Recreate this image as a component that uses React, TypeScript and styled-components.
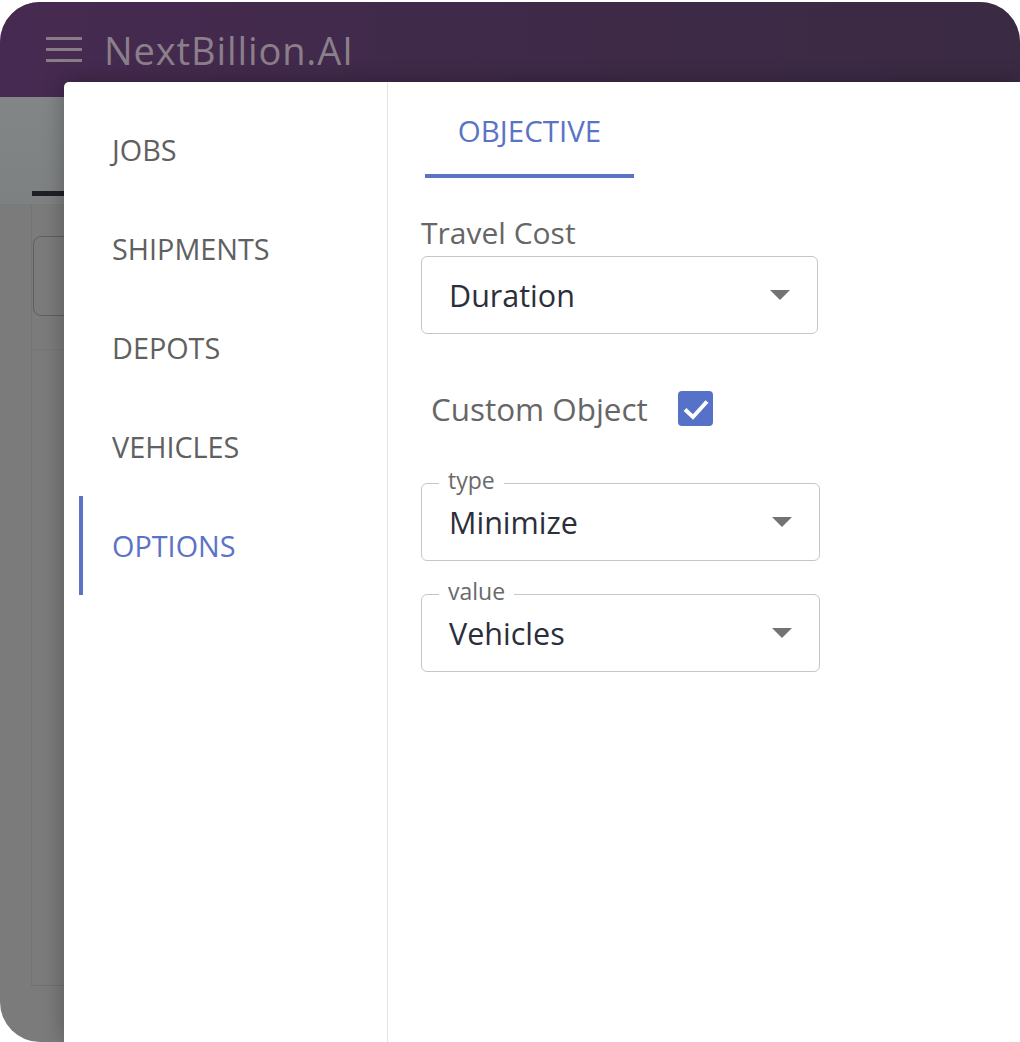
import React from 'react';
import styled, { createGlobalStyle } from 'styled-components';

const GlobalStyle = createGlobalStyle`
  html, body {
    margin: 0;
    padding: 0;
    background: #ffffff;
    font-family: 'Open Sans', 'Noto Sans', sans-serif;
  }
  * { box-sizing: border-box; }
`;

const Frame = styled.div`
  position: relative;
  margin-top: 2px;
  width: 1020px;
  height: 1040px;
  border-radius: 40px 40px 0 40px;
  overflow: hidden;
  display: flex;
  flex-direction: column;
  background: #7b7b7b;
`;

const AppHeader = styled.header`
  height: 95px;
  flex-shrink: 0;
  display: flex;
  align-items: center;
  gap: 22px;
  padding-left: 46px;
  background: linear-gradient(90deg, #472a51 0%, #3f2a49 45%, #3b2a43 100%);
`;

const Burger = styled.div`
  width: 36px;
  display: flex;
  flex-direction: column;
  gap: 7.5px;

  span {
    display: block;
    height: 3.5px;
    background: #877c87;
  }
`;

const Brand = styled.div`
  font-size: 38px;
  letter-spacing: 0.9px;
  color: #8b7f8a;
`;

const SubBar = styled.div`
  height: 108px;
  flex-shrink: 0;
  display: flex;
  align-items: flex-end;
  padding: 0 0 8px 32px;
  background: linear-gradient(180deg, #838687 0%, #7e8182 100%);
  border-bottom: 1px solid #777a7b;
`;

const TabMark = styled.div`
  width: 60px;
  height: 5px;
  background: #1e2024;
`;

const Body = styled.div`
  flex: 1;
  padding: 0 0 56px 31px;
  display: flex;
`;

const Card = styled.div`
  flex: 1;
  border-left: 1px solid #747474;
  border-bottom: 1px solid #6f6f6f;
`;

const CardSection = styled.div`
  height: 145px;
  padding: 31px 0 0 1px;
  border-bottom: 1px solid #757575;
`;

const GhostField = styled.div`
  height: 80px;
  border: 1.5px solid #5f5f5f;
  border-radius: 8px;
`;

const Modal = styled.div`
  position: absolute;
  top: 80px;
  left: 64px;
  right: 0;
  bottom: 0;
  display: flex;
  background: #ffffff;
  border-top-left-radius: 5px;
  box-shadow: 0 0 22px rgba(0, 0, 0, 0.3);
`;

const SideNav = styled.nav`
  width: 324px;
  flex-shrink: 0;
  padding: 18px 0 0 15px;
  border-right: 1px solid #e3e3e3;
  display: flex;
  flex-direction: column;
`;

const NavItem = styled.div<{ $active?: boolean }>`
  height: 99px;
  display: flex;
  align-items: center;
  padding-left: 29px;
  border-left: 4px solid ${(p) => (p.$active ? '#5b73c6' : 'transparent')};
  font-size: 28.8px;
  color: ${(p) => (p.$active ? '#5b73c6' : '#606060')};
  text-transform: uppercase;
`;

const Panel = styled.section`
  flex: 1;
  padding-left: 33px;
  display: flex;
  flex-direction: column;
  align-items: flex-start;
`;

const TabRow = styled.div`
  margin-left: 4px;
  display: flex;
`;

const Tab = styled.div`
  width: 209px;
  height: 96px;
  padding-top: 4px;
  display: flex;
  align-items: center;
  justify-content: center;
  font-size: 29.5px;
  color: #5b73c6;
  border-bottom: 4px solid #5b73c6;
`;

const FieldLabel = styled.div`
  margin-top: 37px;
  font-size: 30px;
  line-height: 36px;
  color: #666666;
`;

const SelectBox = styled.div<{ $gap: number; $wide?: boolean }>`
  position: relative;
  margin-top: ${(p) => p.$gap}px;
  width: ${(p) => (p.$wide ? 399 : 397)}px;
  height: 78px;
  padding: 0 27px 0 27px;
  display: flex;
  align-items: center;
  justify-content: space-between;
  border: 1.5px solid #c6c6c6;
  border-radius: 6px;
`;

const SelectValue = styled.span`
  font-size: 30.5px;
  color: #2b2e3b;
`;

const Legend = styled.span`
  position: absolute;
  top: -15px;
  left: 17px;
  padding: 0 9px;
  background: #ffffff;
  font-size: 23px;
  line-height: 23px;
  color: #6a6a6a;
`;

const CheckRow = styled.label`
  margin-top: 49px;
  height: 50px;
  padding-left: 10px;
  display: flex;
  align-items: center;
  gap: 30px;
  font-size: 31.4px;
  color: #666666;
`;

const CheckBox = styled.span`
  width: 35px;
  height: 35px;
  border-radius: 4px;
  background: #5571c8;
  display: flex;
  align-items: center;
  justify-content: center;
`;

const Arrow = () => (
  <svg width="20" height="10" viewBox="0 0 20 10">
    <polygon points="0,0 20,0 10,10" fill="#737373" />
  </svg>
);

const Select: React.FC<{
  value: string;
  legend?: string;
  gap: number;
  wide?: boolean;
}> = ({ value, legend, gap, wide }) => (
  <SelectBox $gap={gap} $wide={wide}>
    {legend && <Legend>{legend}</Legend>}
    <SelectValue>{value}</SelectValue>
    <Arrow />
  </SelectBox>
);

const navItems = ['Jobs', 'Shipments', 'Depots', 'Vehicles', 'Options'];

export default function App() {
  return (
    <>
      <GlobalStyle />
      <Frame>
        <AppHeader>
          <Burger>
            <span />
            <span />
            <span />
          </Burger>
          <Brand>NextBillion.AI</Brand>
        </AppHeader>
        <SubBar>
          <TabMark />
        </SubBar>
        <Body>
          <Card>
            <CardSection>
              <GhostField />
            </CardSection>
          </Card>
        </Body>

        <Modal>
          <SideNav>
            {navItems.map((item) => (
              <NavItem key={item} $active={item === 'Options'}>
                {item}
              </NavItem>
            ))}
          </SideNav>
          <Panel>
            <TabRow>
              <Tab>OBJECTIVE</Tab>
            </TabRow>
            <FieldLabel>Travel Cost</FieldLabel>
            <Select value="Duration" gap={5} />
            <CheckRow>
              Custom Object
              <CheckBox>
                <svg width="35" height="35" viewBox="0 0 35 35">
                  <path
                    d="M7 18.5 L15 26 L29 10.5"
                    fill="none"
                    stroke="#ffffff"
                    strokeWidth="4"
                  />
                </svg>
              </CheckBox>
            </CheckRow>
            <Select value="Minimize" legend="type" gap={50} wide />
            <Select value="Vehicles" legend="value" gap={33} wide />
          </Panel>
        </Modal>
      </Frame>
    </>
  );
}
